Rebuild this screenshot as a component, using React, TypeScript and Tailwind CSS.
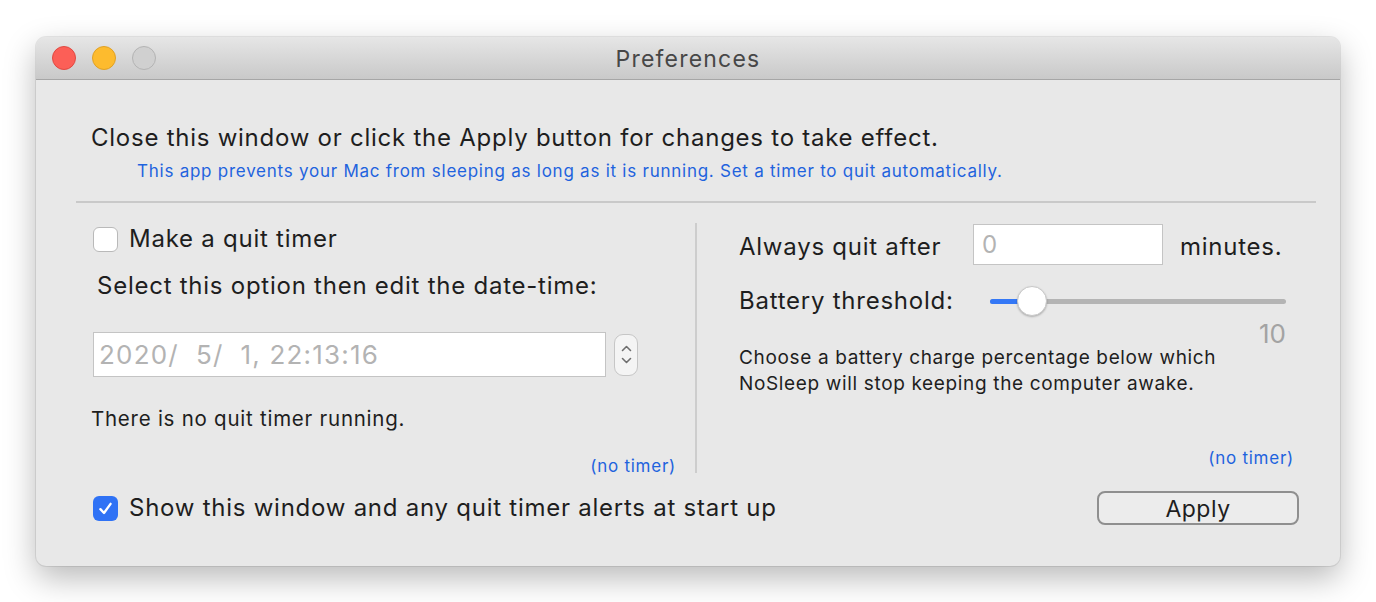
import React from "react";

const font = { fontFamily: "Inter, 'Noto Sans', sans-serif" };

function TrafficLights() {
  return (
    <div className="flex items-center gap-[16px] pl-[16px]">
      <span className="w-[24px] h-[24px] rounded-full bg-[#fc5f57] border border-[#df4a42]" />
      <span className="w-[24px] h-[24px] rounded-full bg-[#fdbb2e] border border-[#dfa026]" />
      <span className="w-[24px] h-[24px] rounded-full bg-[#d0d0d0] border border-[#b3b3b3]" />
    </div>
  );
}

function Checkbox({ checked }: { checked?: boolean }) {
  if (checked) {
    return (
      <span className="w-[25px] h-[25px] rounded-[6px] bg-[#2f72f5] flex items-center justify-center shrink-0">
        <svg width="17" height="17" viewBox="0 0 16 16" fill="none">
          <path d="M3.2 8.6 L6.6 12.2 L12.8 3.6" stroke="white" strokeWidth="2.2" strokeLinecap="round" strokeLinejoin="round" />
        </svg>
      </span>
    );
  }
  return <span className="w-[25px] h-[25px] rounded-[6px] bg-white border border-[#b9b9b9] shrink-0" />;
}

function Stepper() {
  return (
    <div className="ml-[8px] w-[24px] h-[42px] rounded-[9px] border border-[#c6c6c6] bg-[#f4f4f4] flex flex-col items-center justify-center gap-[5px]">
      <svg width="11" height="7" viewBox="0 0 11 7" fill="none">
        <path d="M1.5 5.5 L5.5 1.5 L9.5 5.5" stroke="#6e6e6e" strokeWidth="1.6" strokeLinecap="round" strokeLinejoin="round" />
      </svg>
      <svg width="11" height="7" viewBox="0 0 11 7" fill="none">
        <path d="M1.5 1.5 L5.5 5.5 L9.5 1.5" stroke="#6e6e6e" strokeWidth="1.6" strokeLinecap="round" strokeLinejoin="round" />
      </svg>
    </div>
  );
}

function Slider() {
  return (
    <div className="relative ml-auto mr-[30px] w-[296px] h-[30px] flex items-center">
      <div className="w-full h-[5px] rounded-full bg-[#b4b4b4] flex">
        <div className="w-[32px] h-full rounded-l-full bg-[#3478f6]" />
      </div>
      <div className="absolute left-[27px] top-0 w-[30px] h-[30px] rounded-full bg-white border border-[#c8c8c8] shadow-[0_1px_2px_rgba(0,0,0,0.25)]" />
    </div>
  );
}

export default function App() {
  return (
    <div className="min-h-[602px] bg-white pt-[37px] pl-[36px] text-[#1e1e1e]" style={font}>
      <div className="w-[1304px] h-[529px] rounded-[10px] overflow-hidden bg-[#e8e8e8] shadow-[0_12px_32px_rgba(0,0,0,0.28),0_0_0_1px_rgba(0,0,0,0.08)] flex flex-col">
        {/* Title bar */}
        <div className="relative h-[43px] shrink-0 bg-gradient-to-b from-[#e6e6e6] to-[#c9c9c9] border-b border-[#a6a6a6] flex items-center">
          <TrafficLights />
          <div className="absolute inset-0 pt-[3px] flex items-center justify-center text-[23px] tracking-[1.2px] text-[#474747]">
            Preferences
          </div>
        </div>

        {/* Body */}
        <div className="pt-[44px] pl-[40px] pr-[24px]">
          <div className="pl-[15px] text-[24px] tracking-[0.75px] leading-[28px]">
            Close this window or click the Apply button for changes to take effect.
          </div>
          <div className="pl-[61px] mt-[9px] text-[17px] tracking-[0.75px] leading-[20px] text-[#1f63de]">
            This app prevents your Mac from sleeping as long as it is running. Set a timer to quit automatically.
          </div>
          <div className="mt-[20px] h-[2px] bg-[#c9c9c9]" />

          <div className="flex items-start">
            {/* Left column */}
            <div className="w-[619px] shrink-0 flex flex-col">
              <div className="mt-[22px] pl-[17px] flex items-center gap-[11px] h-[28px]">
                <Checkbox />
                <span className="text-[24px] tracking-[0.75px]">Make a quit timer</span>
              </div>
              <div className="mt-[19px] pl-[21px] text-[24px] tracking-[0.75px] leading-[28px]">
                Select this option then edit the date-time:
              </div>
              <div className="mt-[32px] pl-[17px] flex items-center">
                <div className="w-[513px] h-[45px] bg-white border border-[#c4c4c4] flex items-center pl-[5px] text-[26px] tracking-[1.2px] text-[#b3b3b3] whitespace-pre">
                  {"2020/  5/  1, 22:13:16"}
                </div>
                <Stepper />
              </div>
              <div className="mt-[30px] pl-[15px] text-[20.5px] tracking-[0.75px] leading-[24px]">
                There is no quit timer running.
              </div>
              <div className="mt-[25px] pr-[19px] text-right text-[17px] tracking-[0.75px] leading-[20px] text-[#1f63de]">
                (no timer)
              </div>
            </div>

            {/* Divider */}
            <div className="mt-[20px] w-[2px] h-[250px] bg-[#cdcdcd] shrink-0" />

            {/* Right column */}
            <div className="flex-1 flex flex-col pl-[42px]">
              <div className="mt-[21px] flex items-center h-[41px]">
                <span className="w-[234px] pt-[5px] text-[24px] tracking-[0.75px]">Always quit after</span>
                <div className="w-[190px] h-[41px] bg-white border border-[#c4c4c4] flex items-center pl-[8px] text-[24px] text-[#b3b3b3]">
                  0
                </div>
                <span className="ml-[17px] pt-[5px] text-[24px] tracking-[0.75px]">minutes.</span>
              </div>
              <div className="mt-[21px] flex items-center h-[30px]">
                <span className="text-[24px] tracking-[0.75px]">Battery threshold:</span>
                <Slider />
              </div>
              <div className="mt-[7px] pr-[30px] text-right text-[26px] leading-[22px] text-[#a3a3a3]">10</div>
              <div className="text-[19px] tracking-[0.65px] leading-[26px]">
                <div>Choose a battery charge percentage below which</div>
                <div>NoSleep will stop keeping the computer awake.</div>
              </div>
              <div className="mt-[51px] pr-[22px] text-right text-[17px] tracking-[0.75px] leading-[20px] text-[#1f63de]">
                (no timer)
              </div>
            </div>
          </div>

          {/* Bottom row */}
          <div className="mt-[15px] flex items-center h-[34px] pl-[17px] pr-[17px]">
            <Checkbox checked />
            <span className="ml-[11px] text-[24px] tracking-[0.75px]">Show this window and any quit timer alerts at start up</span>
            <button className="ml-auto w-[202px] h-[34px] rounded-[8px] border-[2px] border-[#8f8f8f] bg-[#ececec] pt-[2px] text-[23px] tracking-[0.5px] leading-none text-[#1e1e1e]">
              Apply
            </button>
          </div>
        </div>
      </div>
    </div>
  );
}
